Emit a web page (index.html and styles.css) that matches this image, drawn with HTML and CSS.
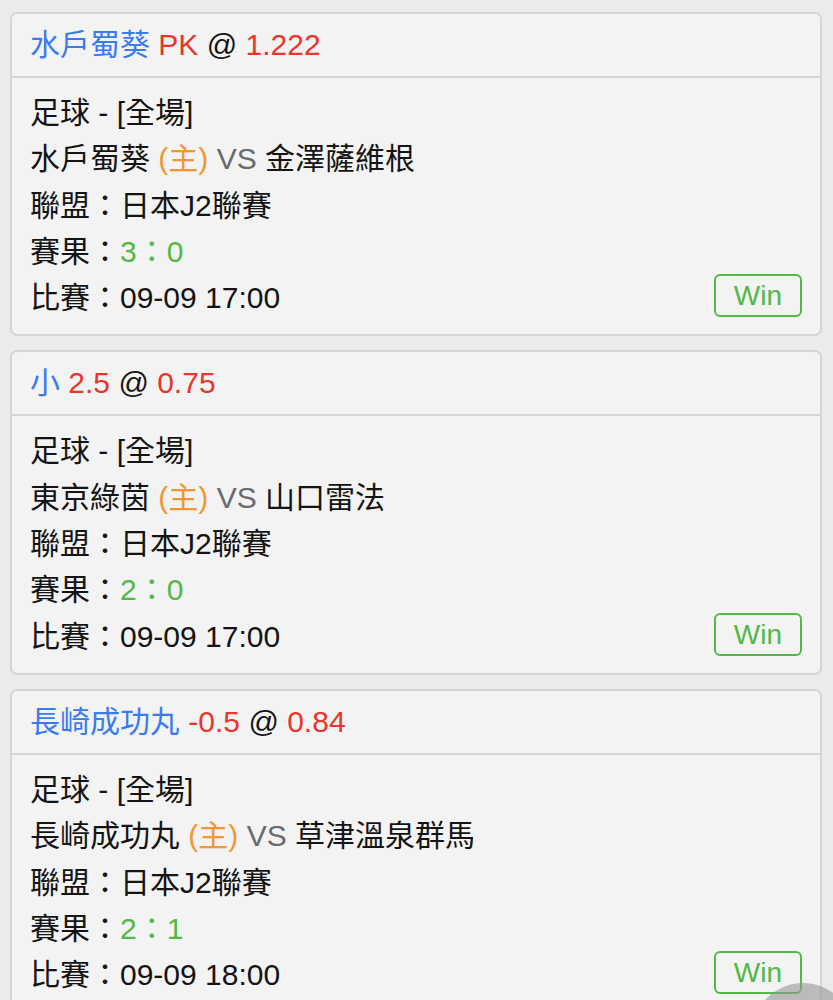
FILE: index.html
```html
<!DOCTYPE html>
<html lang="zh-Hant">
  <head>
    <meta charset="UTF-8" />
    <meta name="viewport" content="width=device-width, initial-scale=1.0" />
    <title>注單</title>
    <link rel="stylesheet" href="styles.css">
  </head>
  <body>
    <div class="bet-list">
      <div class="bet-card">
        <div class="bet-title">
          <span class="pick">水戶蜀葵</span>
          <span class="odds">PK</span> @ <span class="odds">1.222</span>
        </div>
        <div class="bet-body">
          <div class="bet-info">
            <div>足球 - [全場]</div>
            <div>水戶蜀葵 <span class="home">(主)</span> <span class="vs">VS</span> 金澤薩維根</div>
            <div>聯盟：日本J2聯賽</div>
            <div>賽果：<span class="score">3：0</span></div>
            <div>比賽：09-09 17:00</div>
          </div>
          <span class="result-tag">Win</span>
        </div>
      </div>

      <div class="bet-card">
        <div class="bet-title">
          <span class="pick">小</span>
          <span class="odds">2.5</span> @ <span class="odds">0.75</span>
        </div>
        <div class="bet-body">
          <div class="bet-info">
            <div>足球 - [全場]</div>
            <div>東京綠茵 <span class="home">(主)</span> <span class="vs">VS</span> 山口雷法</div>
            <div>聯盟：日本J2聯賽</div>
            <div>賽果：<span class="score">2：0</span></div>
            <div>比賽：09-09 17:00</div>
          </div>
          <span class="result-tag">Win</span>
        </div>
      </div>

      <div class="bet-card">
        <div class="bet-title">
          <span class="pick">長崎成功丸</span>
          <span class="odds">-0.5</span> @ <span class="odds">0.84</span>
        </div>
        <div class="bet-body">
          <div class="bet-info">
            <div>足球 - [全場]</div>
            <div>長崎成功丸 <span class="home">(主)</span> <span class="vs">VS</span> 草津溫泉群馬</div>
            <div>聯盟：日本J2聯賽</div>
            <div>賽果：<span class="score">2：1</span></div>
            <div>比賽：09-09 18:00</div>
          </div>
          <span class="result-tag">Win</span>
        </div>
      </div>
    </div>

    <div class="float-btn"></div>
  </body>
</html>
```

FILE: styles.css
```css
body {
  margin: 0;
  background: #ebebeb;
  font-family: "Liberation Sans", "Noto Sans CJK TC", sans-serif;
  font-size: 30px;
  color: #141414;
  overflow: hidden;
  height: 100vh;
}

.bet-list {
  display: flex;
  flex-direction: column;
  gap: 14px;
  padding: 12px 11px 0 10px;
}

.bet-card {
  background: #f3f3f3;
  border: 2px solid #d5d5d5;
  border-radius: 7px;
}

/* Header line: pick @ odds */
.bet-title {
  line-height: 36px;
  padding: 13px 18px;
  border-bottom: 2px solid #d5d5d5;
}

.pick {
  color: #3a7bf0;
}

.odds {
  color: #e8362b;
}

.bet-body {
  display: flex;
  justify-content: space-between;
  align-items: flex-end;
  padding: 12px 18px 13px 18px;
}

.bet-info {
  line-height: 46.3px;
}

.home {
  color: #f29632;
}

.vs {
  color: #6a6a6a;
}

.score {
  color: #52b846;
}

.result-tag {
  color: #52b846;
  border: 2px solid #52b846;
  border-radius: 6px;
  font-size: 28px;
  line-height: 39px;
  padding: 0 18px;
  margin-bottom: 4px;
}

/* Floating button peeking in at the bottom right */
.float-btn {
  position: fixed;
  left: 752px;
  top: 983px;
  width: 102px;
  height: 102px;
  border-radius: 50%;
  background: rgba(150, 150, 150, 0.6);
}
```
